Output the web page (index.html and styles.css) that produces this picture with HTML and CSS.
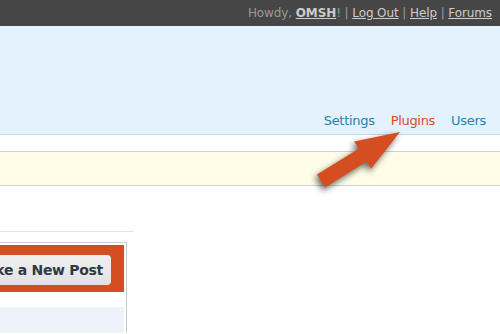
FILE: index.html
```html
<!DOCTYPE html><html lang="en">
<head>
    <meta charset="UTF-8">
    <meta name="viewport" content="width=device-width, initial-scale=1.0">
    <title>Dashboard</title>
    <link rel="stylesheet" href="styles.css">
</head>
<body>
    <div class="topbar">
        <span class="howdy">Howdy, <a href="#">OMSH</a>!</span> |
        <a href="#">Log Out</a> |
        <a href="#">Help</a> |
        <a href="#">Forums</a>
    </div>

    <div class="header">
        <ul class="nav">
            <li><a href="#">Settings</a></li>
            <li><a href="#" class="current">Plugins</a></li>
            <li><a href="#">Users</a></li>
        </ul>
    </div>

    <div class="notice"></div>

    <div class="content">
        <div class="rule"></div>
        <div class="box">
            <div class="box-head">
                <a href="#" class="post-btn">Make a New Post</a>
            </div>
            <div class="box-row"></div>
        </div>
    </div>

    <svg class="arrow" width="110" height="80" viewBox="0 0 110 80">
        <polygon points="100,12 54.2,21.6 58.6,28.8 17,54.6 25,67.4 66.6,41.6 71,48.8" fill="#d54e21"/>
    </svg>
</body>
</html>
```

FILE: styles.css
```css
body {
    margin: 0;
    font-family: "DejaVu Sans", Verdana, sans-serif;
    background: white;
    overflow: hidden;
}
a {
    text-decoration: none;
}
.topbar {
    height: 26px;
    background: #464646;
    color: #999;
    font-size: 12px;
    line-height: 26px;
    text-align: right;
    padding-right: 8px;
    letter-spacing: -0.1px;
}
.topbar a {
    color: #ccc;
    text-decoration: underline;
}
.howdy a {
    font-weight: bold;
}
.header {
    height: 108px;
    background: #e4f2fd;
    border-bottom: 1px solid #c6d9e9;
    display: flex;
    justify-content: flex-end;
    align-items: flex-end;
}
.nav {
    list-style: none;
    margin: 0 14px 6px 0;
    padding: 0;
    display: flex;
    gap: 16px;
    font-size: 13px;
    letter-spacing: -0.3px;
}
.nav a {
    color: #2583ad;
}
.nav a.current {
    color: #d54e21;
}
.notice {
    margin-top: 16px;
    height: 33px;
    background: #fffde7;
    border-top: 1px solid #d0d0d0;
    border-bottom: 1px solid #d0d0d0;
}
.content {
    padding-top: 45px;
}
.rule {
    width: 134px;
    border-top: 1px solid #e2e2e2;
}
.box {
    margin: 10px 0 0 -39px;
    width: 160px;
    height: 88px;
    border: 1px solid #ccc;
    border-bottom: none;
    padding: 2px 2px 0 2px;
}
.box-head {
    background: #d54e21;
    height: 47px;
    padding: 10px 13px 0 0;
    box-sizing: border-box;
    display: flex;
    justify-content: flex-end;
}
.post-btn {
    flex-shrink: 0;
    height: 30px;
    line-height: 31px;
    padding: 0 8px;
    border-radius: 4px;
    background: linear-gradient(#f0f0f0, #e2e2e2);
    color: #2d3a45;
    font-weight: bold;
    font-size: 14px;
    letter-spacing: -0.3px;
    white-space: nowrap;
}
.box-row {
    margin-top: 15px;
    height: 26px;
    background: #eef3f9;
}
.arrow {
    position: absolute;
    left: 300px;
    top: 120px;
    filter: drop-shadow(-2px 3px 3px rgba(0, 0, 0, 0.6));
}
```
